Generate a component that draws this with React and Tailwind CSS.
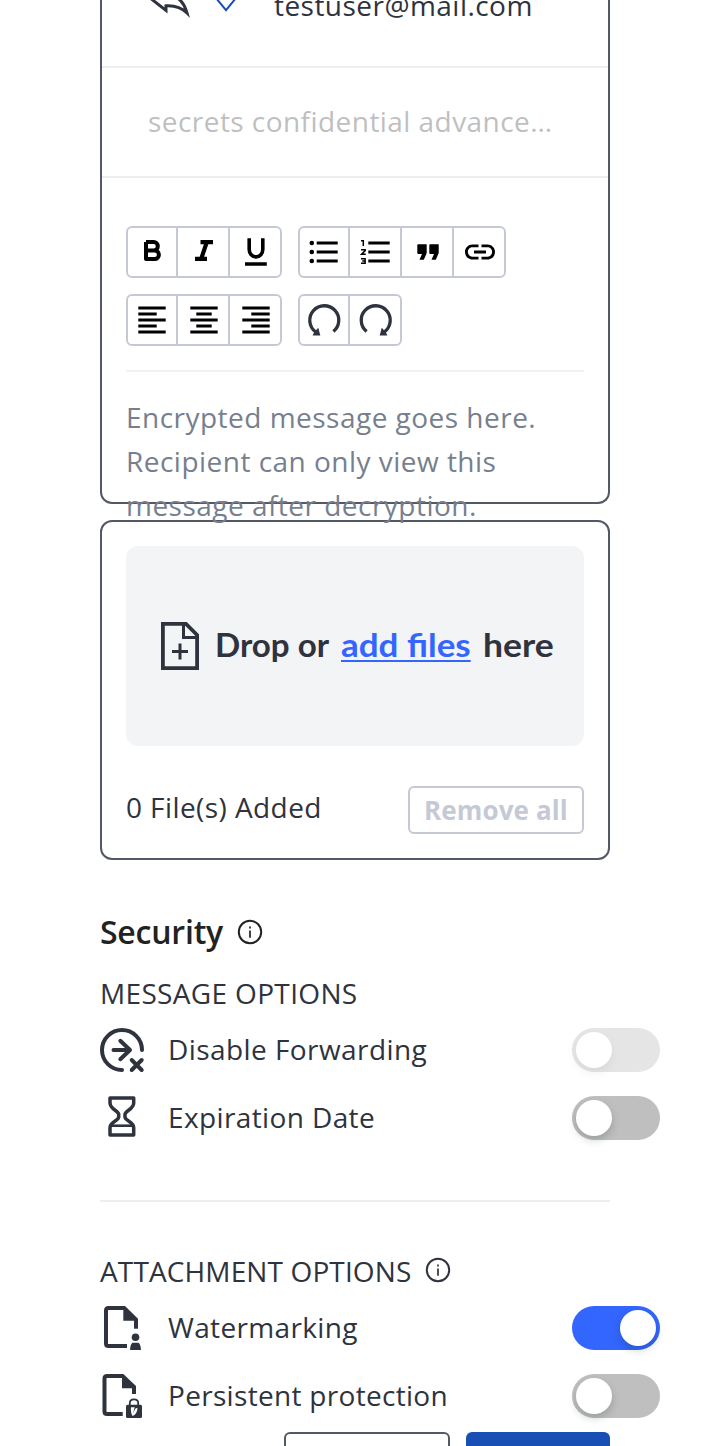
import { MdLink } from "react-icons/md";

const ink = "#2e333d";

function Glyph({ children }) {
  return (
    <svg viewBox="0 0 48 48" className="size-12 shrink-0" fill="none" stroke="#000" strokeWidth="3">
      {children}
    </svg>
  );
}

const glyphs = {
  bold: (
    <path strokeWidth="4" strokeLinejoin="round" d="M18 14H25.6A4.2 4.2 0 0 1 25.6 22.4H18M18 14V31H26.6A4.3 4.3 0 0 0 26.6 22.4H18" />
  ),
  italic: <path strokeWidth="4.2" d="M20.5 14.1H33M15 30.9H27M26.8 14.2L21.2 30.8" />,
  underline: <path strokeWidth="3.6" d="M17.2 10.3V21.5A6.8 7.4 0 0 0 30.8 21.5V10.3M13 36H34.8" />,
  bullets: (
    <>
      <path d="M16.7 15H37.7M16.7 24H37.7M16.7 33H37.7" />
      <g fill="#000" stroke="none">
        <circle cx="11.8" cy="15" r="2.3" />
        <circle cx="11.8" cy="24" r="2.3" />
        <circle cx="11.8" cy="33" r="2.3" />
      </g>
    </>
  ),
  numbers: (
    <>
      <path d="M16.3 15H37.7M16.3 24H37.7M16.3 33H37.7" />
      <path strokeWidth="1.5" d="M9 12.8H11.3V18M9 21.8H13.2V22.6L9.6 26.2H13.8M9 30.8H13.1V35.2H9M10.3 33H13" />
    </>
  ),
  quote: (
    <path fill="#000" stroke="none" d="M14.3 16.3H22.7V25L19.8 31.7H15.5L18 26H14.3Q13.3 26 13.3 25V17.3Q13.3 16.3 14.3 16.3ZM26.3 16.3H34.7V25L31.8 31.7H27.5L30 26H26.3Q25.3 26 25.3 25V17.3Q25.3 16.3 26.3 16.3Z" />
  ),
  left: <path d="M10.3 12H37.7M10.3 18H28.7M10.3 24H37.7M10.3 30H28.7M10.3 36H37.7" />,
  center: <path d="M10.3 12H37.7M16.3 18H31.7M10.3 24H37.7M16.3 30H31.7M10.3 36H37.7" />,
  right: <path d="M10.3 12H37.7M19.3 18H37.7M10.3 24H37.7M19.3 30H37.7M10.3 36H37.7" />,
  undo: (
    <g stroke={ink} strokeWidth="3.3">
      <path d="M33.4 35.5A14.5 14.5 0 1 0 15.5 35.8" />
      <path fill={ink} stroke="none" d="M18.300 31.800L20.300 39.400H12.600L14.300 36Z" />
    </g>
  ),
  redo: (
    <g stroke={ink} strokeWidth="3.3">
      <path d="M14.6 35.5A14.5 14.5 0 1 1 32.5 35.8" />
      <path fill={ink} stroke="none" d="M29.700 31.800L27.700 39.400H35.400L33.700 36Z" />
    </g>
  ),
};

function ToolGroup({ items }) {
  return (
    <div className="flex h-[52px] overflow-hidden rounded-[6px] border-2 border-[#c5c9d6]">
      {items.map((name, i) => (
        <button
          key={name}
          aria-label={name}
          className={
            "flex items-center overflow-hidden " +
            (i === 0 ? "w-12" : "w-[52px] border-l-2 border-[#c5c9d6] pl-0.5")
          }
        >
          {name === "link" ? (
            <MdLink className="ml-[6px] size-9 shrink-0" color="#000" />
          ) : (
            <Glyph>{glyphs[name]}</Glyph>
          )}
        </button>
      ))}
    </div>
  );
}

function Info({ color }) {
  return (
    <svg viewBox="0 0 26 26" className="size-[26px]" fill="none" stroke={color} strokeWidth="2">
      <circle cx="13" cy="13" r="11.2" />
      <path strokeWidth="1.7" d="M13 11.5V18.7M13 7.4V9.4" />
    </svg>
  );
}

function ForwardIcon() {
  return (
    <svg viewBox="0 0 48 48" className="size-12" fill="none" stroke={ink} strokeWidth="4" strokeLinecap="round" strokeLinejoin="round">
      <path d="M42 24A20 20 0 1 0 22 44" />
      <path d="M13.5 24H30M20.3 14.8L30 24L20.3 33.2" />
      <path d="M31.7 34L41.7 44M41.7 34L31.7 44" />
    </svg>
  );
}

function HourglassIcon() {
  return (
    <svg viewBox="0 0 48 48" className="size-12" fill="none" stroke={ink} strokeWidth="3.5" strokeLinejoin="round">
      <path d="M10 4H33.700V9C33.700 15.500 25 16.500 25 20.500V23C25 27 33.700 27.500 33.700 34V41H10V34C10 27.500 18.700 27 18.700 23V20.500C18.700 16.500 10 15.500 10 9Z" />
      <path strokeWidth="2.600" d="M10.500 31.700H33.200" />
    </svg>
  );
}

function WatermarkIcon() {
  return (
    <svg viewBox="0 0 48 48" className="size-12" fill="none" stroke={ink} strokeWidth="4">
      <path d="M27 42H8.500Q6 42 6 39.500V6.500Q6 4 8.500 4H25" />
      <path d="M36 15V24.700" />
      <path fill={ink} stroke="none" d="M25 2L38 14.700V16.700H23.300V2Z" />
      <circle cx="35.500" cy="33.200" r="3.800" fill={ink} stroke="none" />
      <path fill={ink} stroke="none" d="M32.500 38.800H38.500Q40.800 40.500 41 46H30Q30.200 40.500 32.500 38.800Z" />
    </svg>
  );
}

function LockFileIcon() {
  return (
    <svg viewBox="0 0 48 48" className="size-12" fill="none" stroke={ink} strokeWidth="4">
      <path d="M22.700 42H7Q4.500 42 4.500 39.500V6.500Q4.500 4 7 4H23" />
      <path d="M34 15V22" />
      <path fill={ink} stroke="none" d="M23.300 2L36 14V16.300H22V2Z" />
      <path strokeWidth="1.800" d="M29.800 33.500V31Q29.800 27.300 34 27.300T38.200 31V33.500" />
      <rect x="26" y="32.700" width="16" height="13.300" rx="1.500" fill={ink} stroke="none" />
      <path fill="#fff" stroke="none" d="M31 35.300L34.700 35.300L33 41L35.500 36.500L37.300 35.800C37.800 39.500 35.500 43 32.500 44C31 41.500 30.700 38 31 35.300Z" />
    </svg>
  );
}

function Toggle({ on, disabled }) {
  return (
    <span
      className={
        "flex h-11 w-[88px] items-center rounded-full " +
        (on ? "justify-end bg-[#3366ff] pr-1" : "bg-[#bfbfbf] pl-1") +
        (disabled ? " opacity-40" : "")
      }
    >
      <span className="size-9 rounded-full bg-white shadow-[0_4px_8px_rgba(0,35,11,0.2)]" />
    </span>
  );
}

function OptionRow({ icon, label, tracking, on, disabled }) {
  return (
    <div className="flex h-11 w-[560px] items-center">
      <div className="mr-5 h-12 w-12">{icon}</div>
      <span className={"mb-0.5 flex-1 " + tracking}>{label}</span>
      <Toggle on={on} disabled={disabled} />
    </div>
  );
}

export default function App() {
  return (
    <div className="h-[1446px] w-[710px] overflow-hidden bg-white px-[100px] font-['Open_Sans',sans-serif] text-[28px] leading-[44px] text-[#2e333d]">
      <section className="h-[504px] rounded-b-[12px] border-x-2 border-b-2 border-[#525866]">
        <div className="flex h-[68px] items-start overflow-hidden border-b-2 border-[#eeeeee] pl-[44px]">
          <svg viewBox="0 0 48 20" className="h-5 w-12" fill="none" stroke={ink} strokeWidth="3">
            <path d="M3.500 -2.500L20 10.500V5.800C29 5.300 35 7 41 13C38.500 4 33 -3 25 -5" />
          </svg>
          <svg viewBox="0 0 24 14" className="ml-[20px] h-[14px] w-6" fill="none" stroke="#184fb5" strokeWidth="2">
            <path d="M2 -2L12 10.200L22 -2" />
          </svg>
          <span className="-mt-[17px] ml-9 tracking-[0.46px]">testuser@mail.com</span>
        </div>
        <div className="flex h-[110px] items-center border-b-2 border-[#eeeeee] pb-0.5 pl-[46px] tracking-[0.45px] text-[#bfbfbf]">
          secrets confidential advance…
        </div>
        <div className="px-6 pt-12">
          <div className="flex gap-4">
            <ToolGroup items={["bold", "italic", "underline"]} />
            <ToolGroup items={["bullets", "numbers", "quote", "link"]} />
          </div>
          <div className="mt-4 flex gap-4">
            <ToolGroup items={["left", "center", "right"]} />
            <ToolGroup items={["undo", "redo"]} />
          </div>
          <p className="mt-6 border-t-2 border-[#f2f2f2] pt-[23px] tracking-[0.48px] text-[#777f8e]">
            Encrypted message goes here.
            <br />
            Recipient can only view this
            <br />
            message after decryption.
          </p>
        </div>
      </section>

      <section className="mt-4 h-[340px] rounded-[12px] border-2 border-[#525866] p-6">
        <div className="flex h-[200px] items-center rounded-[12px] bg-[#f3f4f6] pl-[34px] font-['Lato',sans-serif] text-[32px] font-bold">
          <svg viewBox="0 0 40 50" className="h-[50px] w-10 shrink-0" fill="none" stroke={ink} strokeWidth="3.800">
            <path d="M2.900 2.900H26L37.100 14V47.100H2.900Z" />
            <path strokeWidth="3" d="M23.500 3V16.500H37" />
            <path strokeWidth="3" d="M20 22.500V38.500M12 30.500H28" />
          </svg>
          <span className="mb-[3px] ml-[15px] w-[126px] shrink-0">
            <span className="inline-block origin-left scale-x-[1.036] whitespace-nowrap">Drop or</span>
          </span>
          <span className="mb-[3px] w-[142px] shrink-0">
            <a className="inline-block origin-left scale-x-[1.093] whitespace-nowrap text-[#3366ff] underline decoration-2 underline-offset-[3px]">
              add files
            </a>
          </span>
          <span className="mb-[3px] origin-left scale-x-[1.11] whitespace-nowrap">here</span>
        </div>
        <div className="mt-10 flex items-start justify-between">
          <span className="-mt-px tracking-[0.42px]">0 File(s) Added</span>
          <button className="h-12 w-[176px] rounded-[6px] border-2 border-[#c5c9d6] text-[26px] leading-[44px] font-bold tracking-[0.12px] text-[#c5c9d6]">
            Remove all
          </button>
        </div>
      </section>

      <div className="mt-[50px] flex h-11 items-center text-[32px] font-semibold tracking-[-0.22px] text-[#222222]">
        Security
        <span className="ml-[14px]"><Info color="#222222" /></span>
      </div>
      <div className="mt-[17px] h-11 tracking-[0.34px]">MESSAGE OPTIONS</div>
      <div className="mt-[13px] flex flex-col gap-6">
        <OptionRow icon={<ForwardIcon />} label="Disable Forwarding" tracking="tracking-[0.43px]" disabled />
        <OptionRow icon={<HourglassIcon />} label="Expiration Date" tracking="tracking-[0.38px]" />
      </div>
      <hr className="mt-[60px] border-t-2 border-[#eeeeee]" />
      <div className="mt-[47px] flex h-11 items-center tracking-[0.13px]">
        ATTACHMENT OPTIONS
        <span className="mb-0.5 ml-[14px]"><Info color={ink} /></span>
      </div>
      <div className="mt-[13px] flex flex-col gap-6">
        <OptionRow icon={<WatermarkIcon />} label="Watermarking" tracking="tracking-[0.35px]" on />
        <OptionRow icon={<LockFileIcon />} label="Persistent protection" tracking="tracking-[0.31px]" />
      </div>
      <div className="mt-[14px] flex justify-end gap-4">
        <button aria-label="Cancel" className="h-14 w-[166px] rounded-[6px] border-2 border-[#525866]" />
        <button aria-label="Send" className="h-14 w-[144px] rounded-[6px] bg-[#184fb5]" />
      </div>
    </div>
  );
}
